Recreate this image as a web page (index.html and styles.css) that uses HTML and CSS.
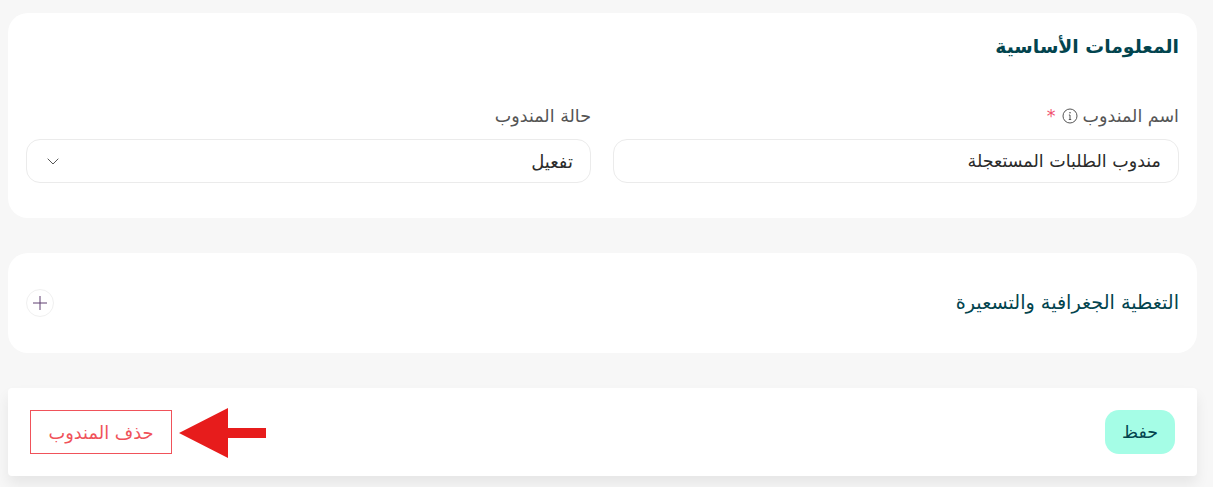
FILE: index.html
```html
<!DOCTYPE html>
<html lang="ar" dir="rtl">
<head>
<meta charset="utf-8">
<title>المندوب</title>
<link rel="stylesheet" href="styles.css">
</head>
<body>
<main class="page">
  <section class="card basic">
    <h2 class="title">المعلومات الأساسية</h2>
    <div class="fields">
      <div class="field">
        <label class="label">اسم المندوب
          <svg class="info" viewBox="0 0 16 16" width="16" height="16" aria-hidden="true"><circle cx="8" cy="8" r="7" fill="none" stroke="#555" stroke-width="1"/><path d="M8 7V11.5M6.8 11.5H9.2M6.9 7H8" fill="none" stroke="#555" stroke-width="1"/><circle cx="8" cy="4.8" r=".8" fill="#555"/></svg>
          <span class="req">*</span></label>
        <div class="input">مندوب الطلبات المستعجلة</div>
      </div>
      <div class="field">
        <label class="label">حالة المندوب</label>
        <div class="input select">
          <span class="value">تفعيل</span>
          <svg class="chev" viewBox="0 0 12 7" width="12" height="7" aria-hidden="true"><path d="M.7.7 6 6 11.3.7" fill="none" stroke="#555" stroke-width="1"/></svg>
        </div>
      </div>
    </div>
  </section>
  <section class="card coverage">
    <h2 class="title sub">التغطية الجغرافية والتسعيرة</h2>
    <button class="plus" type="button" aria-label="إضافة"><svg viewBox="0 0 14 14" width="14" height="14" aria-hidden="true"><path d="M7 0V14M0 7H14" stroke="#5f3f70" stroke-width="1" fill="none"/></svg></button>
  </section>
  <section class="actions">
    <button class="save" type="button">حفظ</button>
    <div class="danger-wrap">
      <svg class="arrow" viewBox="0 0 87 50" width="87" height="50" aria-hidden="true"><path d="M0 25 49 0V20H87V30H49V50Z" fill="#e71c1c"/></svg>
      <button class="delete" type="button">حذف المندوب</button>
    </div>
  </section>
</main>
</body>
</html>
```
FILE: styles.css
```css
* { box-sizing: border-box; }
html, body { margin: 0; height: 100%; overflow: hidden; }
body { background: #f7f7f7; font-family: "DejaVu Sans", "Noto Sans", sans-serif; color: #2b2b2b; }
.page { padding: 13px 16px 0 8px; display: flex; flex-direction: column; gap: 35px; width: 1213px; }
.card { background: #fff; border-radius: 20px; }
.basic { height: 205px; padding: 20px 18px 0; }
.title { margin: 0; font-size: 18.8px; line-height: 28px; font-weight: 600; color: #02444e; }
.fields { display: grid; grid-template-columns: 566fr 565fr; gap: 22px; margin-top: 44px; }
.label { display: flex; align-items: center; gap: 5px; height: 22px; font-size: 17.5px; color: #555; }
.info { flex: none; }
.req { color: #f0506e; margin-right: 1px; }
.input { margin-top: 12px; height: 44px; border: 1px solid #ebebeb; border-radius: 14px; padding: 0 17px 0 20px; display: flex; align-items: center; justify-content: space-between; font-size: 17.5px; color: #2b2b2b; background: #fff; }
.value { font-size: 18px; }
.coverage { height: 100px; padding: 0 18px; display: flex; align-items: center; justify-content: space-between; }
.sub { font-size: 19.2px; font-weight: 400; }
.plus { width: 28px; height: 28px; border: 1px solid #f0f0f0; border-radius: 50%; background: #fff; padding: 0; display: flex; align-items: center; justify-content: center; }
.actions { height: 88px; background: #fff; border-radius: 4px; padding: 0 22px; display: flex; align-items: center; justify-content: space-between; box-shadow: 0 8px 14px rgba(0,0,0,.07); }
.save { width: 70px; height: 44px; border: 0; border-radius: 14px; background: #a5fde6; font: inherit; font-size: 17.4px; color: #02444e; }
.danger-wrap { display: flex; align-items: center; gap: 7px; }
.arrow { flex: none; margin-top: 2px; }
.delete { width: 142px; height: 44px; background: #fff; border: 1px solid #f0525a; font: inherit; font-size: 17.8px; color: #f0525a; padding: 0; }
```
